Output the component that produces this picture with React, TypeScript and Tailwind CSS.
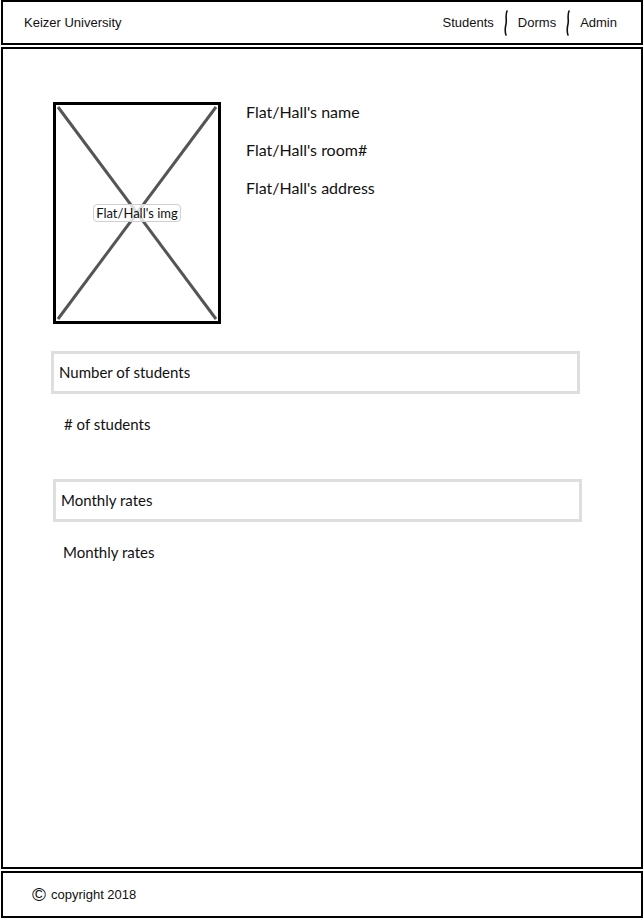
const sans = "font-['Lato','Open_Sans',sans-serif]";
const ui = "font-['Liberation_Sans','DejaVu_Sans',sans-serif]";

function NavDivider() {
  return (
    <svg width="6" height="26" viewBox="0 0 6 26" className="mx-[9px]">
      <path d="M4 1 C2 6, 4 10, 3 14 C2 18, 2 22, 3 25" fill="none" stroke="#111" strokeWidth="1.6" strokeLinecap="round" />
    </svg>
  );
}

function ImagePlaceholder() {
  return (
    <div className="relative w-[168px] h-[222px] shrink-0 border-[3px] border-black bg-white">
      <svg className="absolute inset-0 w-full h-full" viewBox="0 0 162 216" preserveAspectRatio="none">
        <line x1="2" y1="2" x2="160" y2="214" stroke="#555" strokeWidth="3" />
        <line x1="160" y1="2" x2="2" y2="214" stroke="#555" strokeWidth="3" />
      </svg>
      <div className="absolute inset-0 flex items-center justify-center">
        <span className={`${sans} text-[13px] leading-[16px] text-[#111] bg-white/80 border border-[#cfcfcf] rounded-[4px] px-[2px]`}>
          Flat/Hall's img
        </span>
      </div>
    </div>
  );
}

export default function App() {
  return (
    <div className="w-[644px] h-[920px] flex flex-col gap-[2px] bg-white p-[1px] pt-0">
      {/* Header */}
      <header className={`${ui} h-[45px] shrink-0 border-2 border-black flex items-center justify-between pl-[21px] pr-[24px] text-[13px] text-[#111]`}>
        <span>Keizer University</span>
        <nav className="flex items-center">
          <span>Students</span>
          <NavDivider />
          <span>Dorms</span>
          <NavDivider />
          <span>Admin</span>
        </nav>
      </header>

      {/* Main */}
      <main className={`${sans} flex-1 border-2 border-black pl-[50px] pt-[53px] text-[#111]`}>
        <div className="flex gap-[25px]">
          <ImagePlaceholder />
          <div className="flex flex-col gap-[18px] text-[16px] leading-[20px]">
            <span>Flat/Hall's name</span>
            <span>Flat/Hall's room#</span>
            <span>Flat/Hall's address</span>
          </div>
        </div>

        <div className="ml-[-2px] mt-[27px] w-[529px] h-[43px] border-[3px] border-[#dedede] flex items-center pl-[5px] text-[15px]">
          Number of students
        </div>
        <div className="ml-[11px] mt-[20px] text-[15px] leading-[20px]"># of students</div>

        <div className="mt-[45px] w-[529px] h-[43px] border-[3px] border-[#dedede] flex items-center pl-[5px] text-[15px]">
          Monthly rates
        </div>
        <div className="ml-[10px] mt-[20px] text-[15px] leading-[20px]">Monthly rates</div>
      </main>

      {/* Footer */}
      <footer className={`${ui} h-[47px] shrink-0 border-2 border-black flex items-center pl-[29px] text-[13px] text-[#111] mb-[1px]`}>
        <span className="text-[19px] leading-none mr-[5px]">©</span>
        <span>copyright 2018</span>
      </footer>
    </div>
  );
}
